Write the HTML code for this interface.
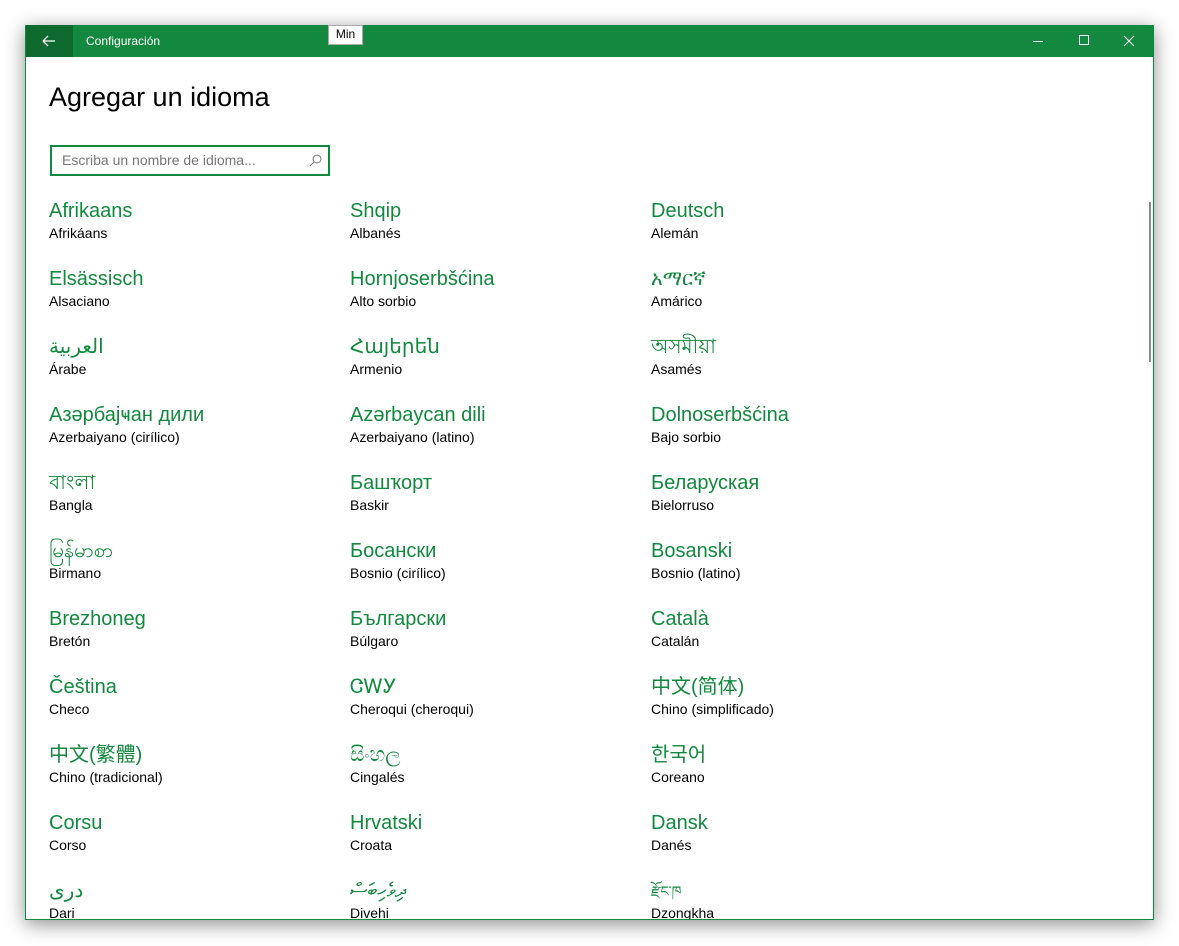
<!DOCTYPE html>
<html><head><meta charset="utf-8"><style>
body{margin:0;width:1179px;height:946px;background:#fff;position:relative;overflow:hidden;font-family:"Liberation Sans","Noto Sans CJK SC",sans-serif}
.win{position:absolute;left:25px;top:25px;width:1127px;height:894px;border:1px solid #12893e;border-top:none;background:#fff;box-shadow:0 4px 18px rgba(0,0,0,.45);overflow:hidden}
.tb{position:absolute;left:0;top:0;width:1129px;height:32px;background:#12893e;margin-left:-1px}
.back{position:absolute;left:0;top:0;width:48px;height:32px;background:#0e6a2f}
.tt{position:absolute;left:61px;top:9px;color:#fff;font-size:12px}
.min{position:absolute;left:302px;top:0;width:33px;height:18px;background:#fff;border:1px solid #aaa;font-size:12px;line-height:17px;text-align:center;color:#000}
h1{position:absolute;left:23px;top:57px;margin:0;font-weight:normal;font-size:27px;color:#000}
.search{position:absolute;left:24px;top:120px;height:27px;border:2px solid #12893e;font-size:14px;color:#777;line-height:27px;padding-left:10px;box-sizing:content-box;width:266px}
.it{position:absolute;width:290px}
.n{color:#12893e;font-size:20px;line-height:24px;white-space:nowrap}
.s{color:#000;font-size:14px;line-height:20px;white-space:nowrap}
.sb{position:absolute;left:1123px;top:177px;width:2px;height:160px;background:#888}
.g{position:absolute;left:-1px;top:2px}
</style></head><body>
<div class="win">
<div class="tb"><div class="back"><svg width="48" height="32"><path d="M18 16h12M18 16l5-5M18 16l5 5" stroke="#fff" stroke-width="1.3" fill="none"/></svg></div>
<div class="tt">Configuración</div>
<svg style="position:absolute;left:1000px;top:0" width="129" height="32"><path d="M8 16.5h10" stroke="#fff"/><path d="M54.5 10.5h9v9h-9z" stroke="#fff" fill="none"/><path d="M99 11l10 10M109 11l-10 10" stroke="#fff"/></svg>
</div>
<div class="min">Min</div>
<h1>Agregar un idioma</h1>
<div class="search">Escriba un nombre de idioma...<svg style="position:absolute;right:6px;top:7px" width="13" height="13"><circle cx="8" cy="5" r="4" stroke="#777" fill="none"/><path d="M5 8L1 12" stroke="#777"/></svg></div>
<div class="sb"></div>
<div class="g">
<div class="it" style="left:24px;top:172px"><div class="n">Afrikaans</div><div class="s">Afrikáans</div></div>
<div class="it" style="left:325px;top:172px"><div class="n">Shqip</div><div class="s">Albanés</div></div>
<div class="it" style="left:626px;top:172px"><div class="n">Deutsch</div><div class="s">Alemán</div></div>
<div class="it" style="left:24px;top:240px"><div class="n">Elsässisch</div><div class="s">Alsaciano</div></div>
<div class="it" style="left:325px;top:240px"><div class="n">Hornjoserbšćina</div><div class="s">Alto sorbio</div></div>
<div class="it" style="left:626px;top:240px"><div class="n">አማርኛ</div><div class="s">Amárico</div></div>
<div class="it" style="left:24px;top:308px"><div class="n">العربية</div><div class="s">Árabe</div></div>
<div class="it" style="left:325px;top:308px"><div class="n">Հայերեն</div><div class="s">Armenio</div></div>
<div class="it" style="left:626px;top:308px"><div class="n">অসমীয়া</div><div class="s">Asamés</div></div>
<div class="it" style="left:24px;top:376px"><div class="n">Азәрбајҹан дили</div><div class="s">Azerbaiyano (cirílico)</div></div>
<div class="it" style="left:325px;top:376px"><div class="n">Azərbaycan dili</div><div class="s">Azerbaiyano (latino)</div></div>
<div class="it" style="left:626px;top:376px"><div class="n">Dolnoserbšćina</div><div class="s">Bajo sorbio</div></div>
<div class="it" style="left:24px;top:444px"><div class="n">বাংলা</div><div class="s">Bangla</div></div>
<div class="it" style="left:325px;top:444px"><div class="n">Башҡорт</div><div class="s">Baskir</div></div>
<div class="it" style="left:626px;top:444px"><div class="n">Беларуская</div><div class="s">Bielorruso</div></div>
<div class="it" style="left:24px;top:512px"><div class="n">မြန်မာစာ</div><div class="s">Birmano</div></div>
<div class="it" style="left:325px;top:512px"><div class="n">Босански</div><div class="s">Bosnio (cirílico)</div></div>
<div class="it" style="left:626px;top:512px"><div class="n">Bosanski</div><div class="s">Bosnio (latino)</div></div>
<div class="it" style="left:24px;top:580px"><div class="n">Brezhoneg</div><div class="s">Bretón</div></div>
<div class="it" style="left:325px;top:580px"><div class="n">Български</div><div class="s">Búlgaro</div></div>
<div class="it" style="left:626px;top:580px"><div class="n">Català</div><div class="s">Catalán</div></div>
<div class="it" style="left:24px;top:648px"><div class="n">Čeština</div><div class="s">Checo</div></div>
<div class="it" style="left:325px;top:648px"><div class="n">ᏣᎳᎩ</div><div class="s">Cheroqui (cheroqui)</div></div>
<div class="it" style="left:626px;top:648px"><div class="n">中文(简体)</div><div class="s">Chino (simplificado)</div></div>
<div class="it" style="left:24px;top:716px"><div class="n">中文(繁體)</div><div class="s">Chino (tradicional)</div></div>
<div class="it" style="left:325px;top:716px"><div class="n">සිංහල</div><div class="s">Cingalés</div></div>
<div class="it" style="left:626px;top:716px"><div class="n">한국어</div><div class="s">Coreano</div></div>
<div class="it" style="left:24px;top:784px"><div class="n">Corsu</div><div class="s">Corso</div></div>
<div class="it" style="left:325px;top:784px"><div class="n">Hrvatski</div><div class="s">Croata</div></div>
<div class="it" style="left:626px;top:784px"><div class="n">Dansk</div><div class="s">Danés</div></div>
<div class="it" style="left:24px;top:852px"><div class="n">دری</div><div class="s">Dari</div></div>
<div class="it" style="left:325px;top:852px"><div class="n">ދިވެހިބަސް</div><div class="s">Divehi</div></div>
<div class="it" style="left:626px;top:852px"><div class="n" style="font-size:14px">རྫོང་ཁ</div><div class="s">Dzongkha</div></div>
</div>
</div>
</body></html>
